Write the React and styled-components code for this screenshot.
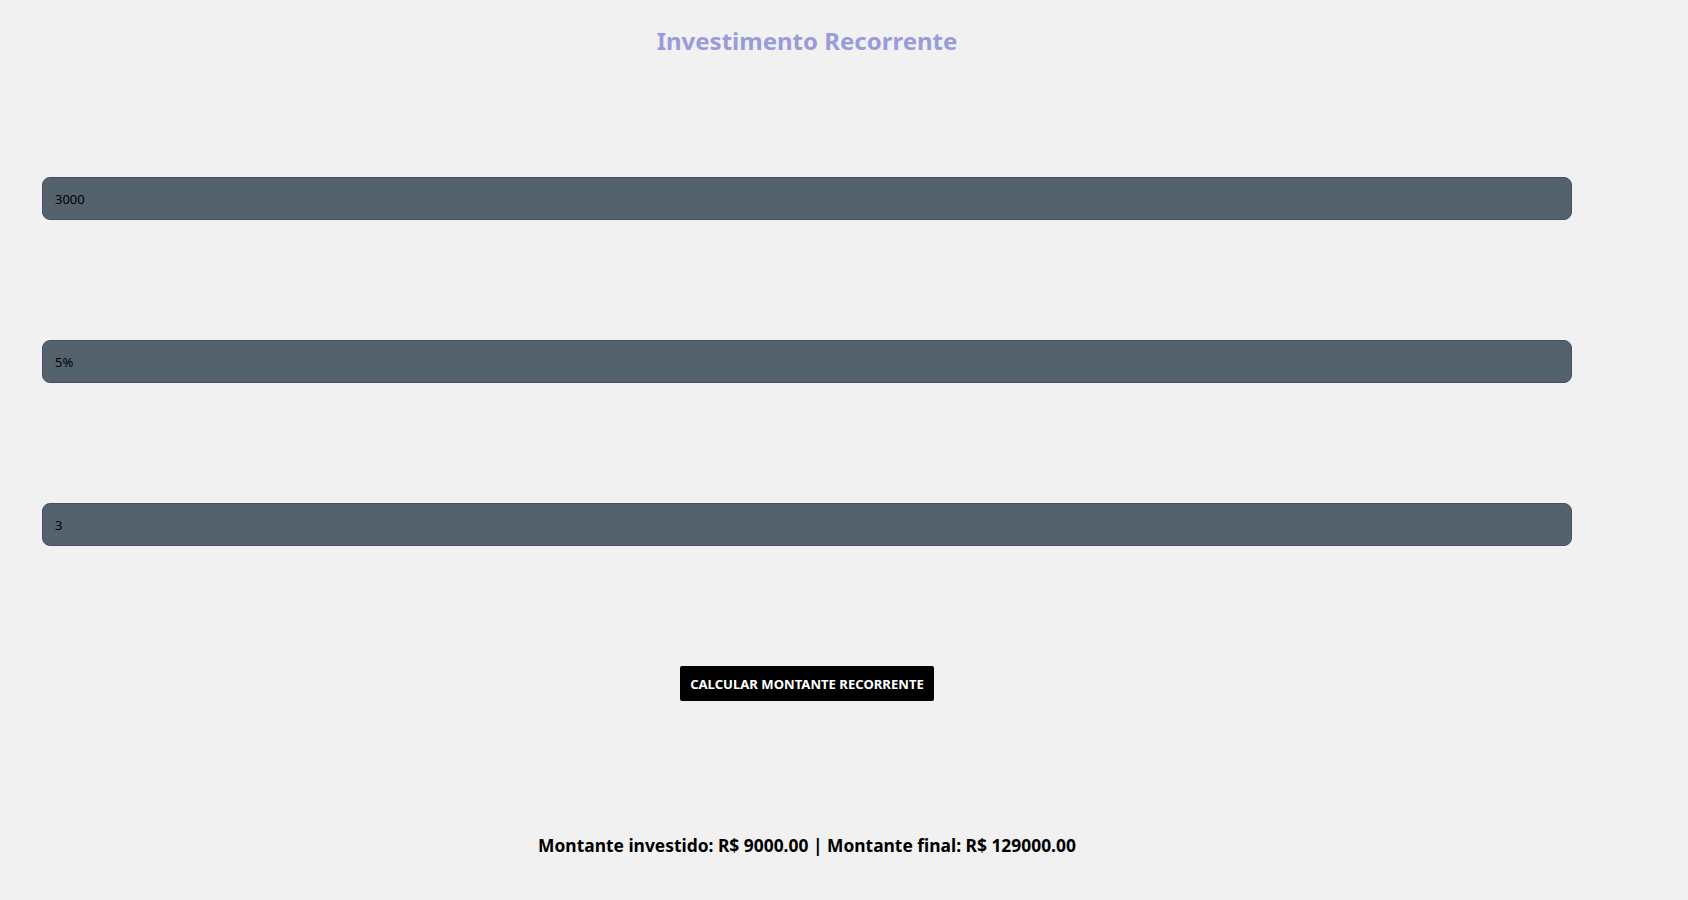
import React, { useState } from 'react';
import styled, { createGlobalStyle } from 'styled-components';

const GlobalStyle = createGlobalStyle`
  html, body {
    margin: 0;
    padding: 0;
    background: #f1f1f1;
  }
  body {
    font-family: "Noto Sans", "Open Sans", sans-serif;
  }
`;

const Page = styled.div`
  width: 1614px;
  min-height: 100vh;
  padding: 25px 42px 40px;
  box-sizing: border-box;
  display: flex;
  flex-direction: column;
  align-items: center;
  gap: 120px;
`;

const Title = styled.h2`
  margin: 0;
  font-size: 24px;
  line-height: 32px;
  font-weight: 700;
  color: #989cd9;
`;

const Field = styled.input`
  width: 100%;
  height: 43px;
  box-sizing: border-box;
  padding: 0 12px;
  background: #54626e;
  border: 1.5px solid #4b4d62;
  border-radius: 8px;
  color: #000;
  font-family: inherit;
  font-size: 13px;
  outline: none;
`;

const Button = styled.button`
  height: 35px;
  padding: 0 10px;
  background: #000;
  color: #fff;
  border: none;
  border-radius: 2px;
  font-family: inherit;
  font-size: 13.1px;
  font-weight: 700;
  text-transform: uppercase;
  cursor: pointer;
`;

const Result = styled.h3`
  margin: 12px 0 0;
  font-size: 17.4px;
  line-height: 25px;
  font-weight: 700;
  color: #000;
`;

const App = () => {
  const [valor, setValor] = useState('3000');
  const [taxa, setTaxa] = useState('5%');
  const [anos, setAnos] = useState('3');

  return (
    <>
      <GlobalStyle />
      <Page>
        <Title>Investimento Recorrente</Title>
        <Field value={valor} onChange={(e) => setValor(e.target.value)} />
        <Field value={taxa} onChange={(e) => setTaxa(e.target.value)} />
        <Field value={anos} onChange={(e) => setAnos(e.target.value)} />
        <Button>Calcular montante recorrente</Button>
        <Result>Montante investido: R$ 9000.00 | Montante final: R$ 129000.00</Result>
      </Page>
    </>
  );
};

export default App;
